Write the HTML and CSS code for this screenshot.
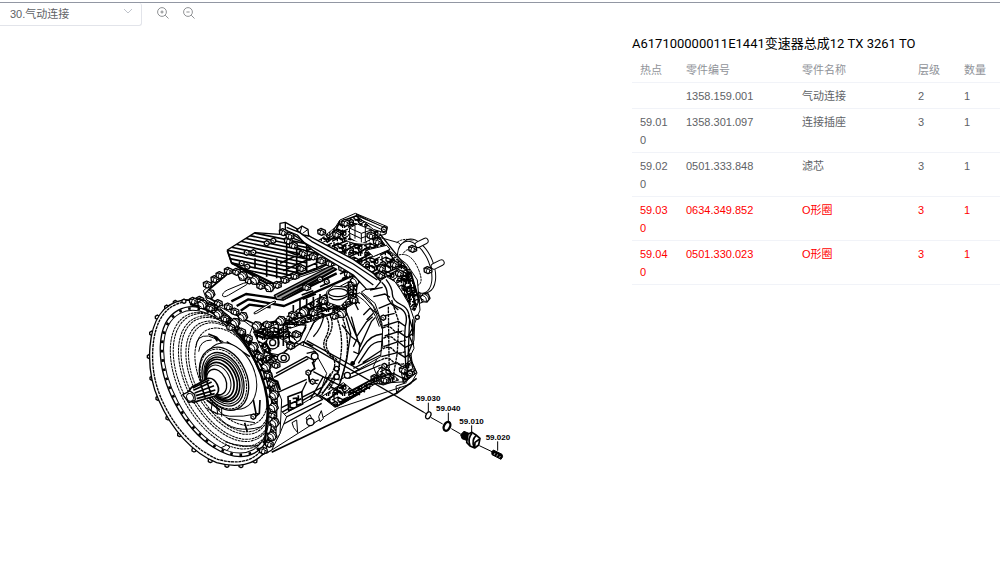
FILE: index.html
```html
<!DOCTYPE html>
<html lang="zh-CN">
<head>
<meta charset="utf-8">
<title>零件目录</title>
<link rel="stylesheet" href="styles.css">
</head>
<body>
<main class="page">
  <section class="viewer">
    <div class="toolbar">
      <div class="picker">
        <select class="picker-select" aria-label="分组"><option>30.气动连接</option></select>
        <svg class="picker-arrow" viewBox="0 0 10 6" aria-hidden="true"><path d="M1 1l4 4 4-4"/></svg>
      </div>
      <button class="tool" type="button" aria-label="放大"><svg viewBox="0 0 12 12"><circle cx="5" cy="5" r="4.4"/><path d="M8.2 8.2l3.3 3.3M3.4 5h3.2M5 3.4v3.2"/></svg></button>
      <button class="tool" type="button" aria-label="缩小"><svg viewBox="0 0 12 12"><circle cx="5" cy="5" r="4.4"/><path d="M8.2 8.2l3.3 3.3M3.4 5h3.2"/></svg></button>
    </div>
    <figure class="drawing">
      <svg class="gearbox" viewBox="0 0 1140 825" role="img" aria-label="变速器总成">
        <defs>
          <pattern id="mesh" width="48" height="42" patternUnits="userSpaceOnUse">
            <path d="M0 12l18-9 14 8 16-8M0 34l15-8 13 10 20-12M6 0v14l10 6v20M32 11v15l12 8M18 3v11l14 8M0 22l10-5M38 42V30M22 28l10 6v8M0 40l22-12M20 20l26-13" class="m"/>
            <ellipse cx="10" cy="28" rx="5" ry="4" class="n"/><ellipse cx="38" cy="17" rx="4" ry="5" class="n"/>
          </pattern>
          <g id="nut"><path d="M-7-4L0-8 7-4 7 4 0 8-7 4z" class="n"/><path d="M-3-1L3 2" class="h"/></g>
          <g id="tab"><path d="M-6-3L0-7 6-3 5 4 0 6-6 3z" class="n"/></g>
          <g id="lug"><path d="M-12-6L-2-11 11-5 12 5 0 10-11 5z" class="n"/><path d="M-11-5Q0-8 10 2M-6 8Q-7 0 2-9M3 9L6-2" class="h"/></g>
          <g id="boss"><path d="M-14-2L-4-13 10-11 15 2 6 13-8 12z" class="n"/><path d="M-9-7Q6-4 4 12M-3-12Q12-6 12 6M-13 2L-2 9" class="h"/></g>
          <clipPath id="bore"><ellipse cx="229" cy="545" rx="130" ry="232" transform="rotate(-28 229 545)"/></clipPath>
          <clipPath id="fins"><path d="M262 150L345 98 430 104 500 130 582 182 540 205 400 252 345 224 275 190z"/></clipPath>
        </defs>

        <!-- output flange -->
        <path d="M718 112L775 128 800 150 850 250 835 290 790 260z" class="w"/>
        <ellipse cx="833" cy="198" rx="47" ry="85" transform="rotate(-22 833 198)" class="w"/>
        <ellipse cx="824" cy="202" rx="45" ry="82" transform="rotate(-22 824 202)" class="w"/>
        <path d="M776 165Q812 155 834 205T826 258M790 160Q800 145 812 150M770 128Q790 112 820 122" class="l d"/>
        <g><path d="M834 134l22-11M882 199l22-11M838 301l18-8" class="po"/><path d="M834 134l22-11M882 199l22-11M838 301l18-8" class="pi"/></g>
        <use href="#lug" x="818" y="147"/><use href="#lug" x="864" y="211"/><use href="#nut" x="833" y="283"/>

        <!-- rear housing -->
        <path d="M560 122L600 60 646 40 742 80 738 102 716 108 745 150 800 192 832 240 840 330 824 370 822 420 812 455 816 485 831 519 812 552 592 625 380 760 330 400 420 180z" class="w h"/>
        <path d="M545 115L600 70 650 46 728 86 716 108 748 155 800 200 826 260 824 330 802 300 780 265 740 235 700 242 600 180 520 130z" fill="url(#mesh)" class="l"/>
        <path d="M608 62L648 48 728 84M648 42L738 88M704 98L770 190 806 216M720 102L795 196M675 168L740 135M650 190L720 160" class="k"/>
        <path d="M560 128L610 90M575 140L640 115M600 158L670 125M625 172L690 140M640 188L700 158M600 62L580 110M690 220L745 190M700 235L770 205" class="b"/>
        <path d="M648 46L728 80 742 82 738 100 700 88z" class="w h"/><path d="M655 56L732 92" class="h"/>
        <path d="M628 84L652 72 694 90 690 120 662 132 630 115z" class="w h"/><path d="M628 84L664 100 694 90M664 100v30M645 78v38M676 84v40M630 100L662 115 692 104" class="h"/>
        <path d="M610 117Q640 137 690 132M680 150L740 136 750 148 700 170z" class="w h"/>
        <path d="M785 215L808 207 838 300 824 332 800 320z" fill="url(#mesh)" class="h"/>
        <path d="M808 216L790 270 815 262 805 322M788 235L822 244M830 270L800 300M812 215L838 305M800 210L828 320" class="b"/>
        <use href="#lug" x="617" y="69"/><use href="#lug" x="545" y="96"/><use href="#lug" x="590" y="103"/><use href="#lug" x="693" y="107"/><use href="#lug" x="712" y="125"/><use href="#nut" x="732" y="88"/><use href="#lug" x="724" y="205"/><use href="#lug" x="763" y="193"/><use href="#lug" x="722" y="226"/><use href="#nut" x="670" y="210"/><use href="#tab" x="832" y="352"/><use href="#boss" x="855" y="293"/><use href="#lug" x="778" y="220"/>

        <!-- rear ribbed case -->
        <path d="M716 245L740 230 765 245 782 270 806 310 823 360 818 420 822 445 810 470 818 505 800 545 720 550 700 500 728 440 726 370 705 310 664 276z" class="w h"/>
        <path d="M725 247Q742 262 742 285T775 322 796 378Q792 420 796 470T790 545M738 238Q757 262 757 282T785 315 808 375L802 540" class="k"/>
        <path d="M690 270L728 262M700 290L735 282 750 292M716 325L752 310 775 330M722 350L764 340M730 378L775 364 795 378M734 408L775 395 800 412 820 400M730 440L775 425 795 442 822 430M724 470L772 458 795 472 812 460M715 505L772 488 798 510M704 535L760 520 798 540" class="k"/>
        <path d="M728 384Q748 374 758 388T790 392M730 415Q750 403 762 417T798 420M728 447Q748 435 760 450T796 455M724 480Q744 468 757 483T795 490M755 300L776 365 772 458 758 540M745 320L748 540" class="k2"/>
        <path d="M805 345l12 40-10 20 10 25-12 30 12 30M818 358v50" class="k"/>
        <path d="M712 515L735 490 755 520 776 540 730 555 700 548z" fill="url(#mesh)" class="h"/>
        <path d="M782 505L812 480 830 518 790 550z" fill="url(#mesh)" class="h"/>
        <use href="#lug" x="790" y="510"/><use href="#nut" x="810" y="520"/><use href="#lug" x="705" y="535"/><use href="#nut" x="733" y="498"/><use href="#lug" x="735" y="540"/><use href="#nut" x="730" y="353"/>

        <!-- mid case -->
        <path d="M605 300L660 278 700 320 728 390 722 470 600 540 500 520 490 430 520 370z" class="w"/>
        <path d="M650 285Q700 315 718 380M663 280Q712 312 728 386" class="h"/>
        <path d="M585 340Q612 400 602 470T565 570M600 335Q630 400 620 470T578 590M570 345Q585 375 565 410T585 475 545 580M560 352Q574 380 557 412T574 470 530 580" class="k2"/>
        <path d="M618 352L632 400 620 480 600 550M634 350L652 415 640 440M612 320L650 410 680 365 698 350M650 410L660 440 694 365 706 352" class="k"/>
        <path d="M640 490L670 440Q690 405 726 402M655 490L685 445Q700 425 726 424M668 488L726 450M640 505L722 465M635 520L722 480M626 535L722 495" class="k"/>
        <path d="M606 375L634 410 660 430 656 462 640 455M655 330L640 300 660 310M670 345L690 325 710 340M680 360L700 340" class="k"/>
        <circle cx="638" cy="490" r="7"/><circle cx="590" cy="530" r="8" class="n"/><circle cx="590" cy="506" r="7" class="n"/><circle cx="622" cy="526" r="9" class="n"/>
        <path d="M545 590L610 548 640 572 726 520 716 545 610 610 585 622z" fill="url(#mesh)" class="h"/>
        <path d="M622 578L706 533M626 585L706 543M630 592L690 560M602 612L660 580M560 600L600 574M590 620L630 590M538 585L590 620M604 575L570 560M655 565l20 11M640 572l20 12M672 556l18 10" class="b"/>
        <path d="M395 757L560 678M560 678L770 580 830 535" class="b"/>
        <path d="M770 580L768 558 800 548M770 580L780 560" class="h"/>

        <!-- lower front case -->
        <path d="M378 470L470 430 520 448 560 520 540 580 420 650 395 600z" class="w"/>
        <path d="M402 532L505 476M410 548L412 578 500 538M408 520L500 470 520 480 524 505 505 520 508 545 536 540" class="k"/>
        <path d="M420 640L525 580 548 598 420 660M420 678L545 610M395 600L420 625 550 560M470 608L500 545M510 600L550 530M530 590L572 520M545 585L585 525" class="k"/>
        <path d="M444 590L485 575 488 612 446 632z" class="b w"/><path d="M450 600v22l13 3M458 596l12-2v22l14-5M475 586v18M450 612l34-16" class="b"/>
        <path d="M398 605L440 650 420 700 398 740 384 680z" class="w h"/><path d="M456 668l14-8 3 38-12-15zM498 654l12-10 12 28-18-4zM536 650l8-18 6 24-10 9z" class="w h"/><circle cx="511" cy="666" r="11" class="n"/>
        <path d="M500 460l25-6 8 12-8 18-8 4 8 18-14 10M505 520l4 22 24 10" class="k"/>
        <circle cx="524" cy="469" r="10" class="n"/><use href="#nut" x="505" y="518"/><use href="#nut" x="518" y="545"/>
        <path d="M340 395L450 395 470 425 420 470 390 500z" fill="url(#mesh)" class="h"/>
        <path d="M375 425L400 405 430 420 450 440 420 465 390 460z" class="w h"/><circle cx="398" cy="428" r="19" class="n"/><circle cx="398" cy="428" r="9" class="n"/><ellipse cx="430" cy="473" rx="18" ry="14" class="n"/><ellipse cx="431" cy="474" rx="8" ry="8" class="n"/><use href="#lug" x="408" y="495"/>
        <path d="M488 425L850 636M500 422L660 510M520 515L610 562M450 450L490 425 520 438M460 400Q490 410 498 380" class="k"/>
        <path d="M498 375L480 420 452 440 440 372zM530 350L510 390M552 345Q545 385 520 410" class="k"/><use href="#lug" x="470" y="403"/><use href="#lug" x="452" y="438"/>

        <!-- top cover -->
        <path d="M190 272L262 212 310 208 400 258 600 190 655 235 645 300 575 340 470 368 412 372 350 392 296 350 200 300z" class="w h"/>
        <path d="M470 330L650 232 650 305 600 335 450 385 430 375z" fill="url(#mesh)" class="h"/>
        <path d="M205 270L262 222M198 258L255 218 318 216M325 240Q370 265 400 272M262 320L300 352 350 375 420 362M200 290L250 318" class="b"/>
        <path d="M248 288Q245 279 262 270L310 250Q330 244 320 254L265 286Q252 293 248 288z" class="w h"/>
        <path d="M274 304L318 282 430 298 590 220M290 318L325 298 432 318 640 226M302 332L328 314 392 322" class="bb"/>
        <path d="M342 338L396 306Q408 300 408 306L350 340Q340 345 342 338z" class="w h"/>
        <path d="M403 286L572 198 590 208 430 300 410 298z" class="k g"/><path d="M412 290L580 203M425 296L588 208" class="b"/>
        <path d="M485 285l35-13M500 290l20-10M540 260l30-14M488 298l40-16M600 222l24-12M606 236l26-12M470 262l60-30M480 272l90-42" class="b"/>
        <path d="M560 275L580 258 620 262 630 290 600 320 565 308z" class="w h"/><ellipse cx="594" cy="278" rx="29" ry="12" class="n"/><path d="M566 290Q590 310 622 288M578 312l8 34h30l6-42" class="k"/>
        <path d="M480 300v35l12 14M500 296v40M520 290v40M540 282v42l12 10M460 315v35M625 245v55M640 240v60l10 12M415 360v80M430 360v78M382 385v24l34 2M350 396Q380 414 425 400M345 404Q385 424 428 408M440 350L560 310M450 362L600 318" class="b"/>
        <path d="M340 378L440 355 445 392 390 408 345 398z" fill="url(#mesh)" class="h"/>
        <use href="#lug" x="202" y="254"/><use href="#lug" x="225" y="238"/><use href="#lug" x="240" y="226"/><use href="#lug" x="265" y="213"/><use href="#lug" x="290" y="216"/><use href="#boss" x="308" y="228"/><use href="#lug" x="328" y="242"/><use href="#boss" x="210" y="282"/><use href="#lug" x="180" y="300"/><use href="#lug" x="235" y="310"/><use href="#lug" x="265" y="320"/><use href="#boss" x="308" y="350"/><use href="#lug" x="285" y="335"/><use href="#boss" x="350" y="378"/><use href="#lug" x="382" y="374"/><use href="#boss" x="422" y="362"/><use href="#lug" x="458" y="345"/><use href="#boss" x="492" y="335"/><use href="#lug" x="520" y="338"/><use href="#lug" x="550" y="302"/><use href="#lug" x="583" y="348"/><use href="#boss" x="606" y="340"/><use href="#boss" x="645" y="242"/><use href="#lug" x="625" y="222"/><use href="#lug" x="608" y="205"/><use href="#lug" x="500" y="262"/><use href="#lug" x="642" y="300"/><use href="#nut" x="560" y="245"/><use href="#nut" x="540" y="238"/>

        <!-- control unit with cooling fins -->
        <path d="M262 150L345 98 430 104 500 130 582 182 540 205 400 252 345 224 275 190z" class="w k"/>
        <g clip-path="url(#fins)">
          <path d="M340 98l230 48M325 106l230 48M311 114l230 48M298 123l230 48M284 132l230 48M271 141l230 48M260 150l230 48M262 162l230 48M266 175l230 48M270 188l230 48M300 206l230 48" class="b"/>
          <path d="M420 190L580 115M430 212L600 135M420 236L620 150M420 248L620 167M345 175v30M380 180v50M410 175v60M440 130v95M470 130v95M500 130v90M530 150v70M440 130l60 25M430 150l80 30" class="b"/>
        </g>
        <path d="M262 152L275 190 345 226M275 188L400 250M292 200L400 262" class="b"/>
        <use href="#nut" x="320" y="158"/><use href="#nut" x="340" y="157"/><use href="#nut" x="305" y="190"/><use href="#nut" x="322" y="200"/><use href="#boss" x="345" y="240"/><use href="#lug" x="362" y="258"/><use href="#boss" x="388" y="262"/><use href="#lug" x="412" y="255"/><use href="#lug" x="435" y="240"/><use href="#lug" x="465" y="228"/><use href="#nut" x="380" y="130"/><use href="#nut" x="400" y="122"/><use href="#lug" x="520" y="170"/><use href="#lug" x="545" y="182"/><use href="#lug" x="570" y="190"/><use href="#lug" x="490" y="160"/><use href="#lug" x="460" y="136"/><use href="#lug" x="485" y="205"/><use href="#lug" x="445" y="122"/>

        <!-- long top rib -->
        <path d="M420 70L436 67 474 88 515 112 640 178 700 220 722 245 705 265 680 268 640 225 520 152 484 120 460 104 420 92z" class="w k"/>
        <path d="M436 67V90L472 105 492 128 640 210 700 255M440 82L480 98 515 124 640 192 712 240" class="k"/>
        <path d="M470 90L486 78 504 88 506 108 490 105z" class="w k"/><path d="M486 78l-6 20M504 88l-16 12" class="h"/><use href="#lug" x="430" y="97"/><use href="#lug" x="450" y="108"/>

        <!-- clutch bell housing -->
        <path d="M75 320L130 300 185 298 270 350 340 430 390 510 425 600 420 700 395 750 340 780z" class="w h"/>
        <path d="M180 300L225 312 280 360 330 420 380 480 400 540 412 600 408 700 380 740 360 600 300 450z" fill="url(#mesh)" class="h"/>
        <g class="tabs"><use href="#tab" x="106" y="308"/><use href="#tab" x="80" y="322"/><use href="#tab" x="52" y="352"/><use href="#tab" x="35" y="400"/><use href="#tab" x="28" y="470"/><use href="#tab" x="36" y="535"/><use href="#tab" x="54" y="595"/><use href="#tab" x="84" y="654"/><use href="#tab" x="119" y="704"/><use href="#tab" x="162" y="750"/><use href="#tab" x="211" y="782"/><use href="#tab" x="261" y="796"/><use href="#tab" x="303" y="797"/><use href="#tab" x="345" y="783"/></g>
        <path d="M130 300C70 310 36 360 30 440C25 500 36 555 56 600C95 690 160 760 230 788C290 805 345 795 375 755C420 640 380 500 300 400C240 330 180 298 130 300z" class="w k"/>
        <path d="M128 307C77 317 45 363 39 440C34 500 45 552 64 596C102 682 163 748 233 778C290 794 338 786 366 748" class="k2"/>
        <ellipse cx="229" cy="545" rx="140" ry="243" transform="rotate(-28 229 545)" class="w k"/>
        <ellipse cx="230" cy="545" rx="136" ry="238" transform="rotate(-28 230 545)" class="teeth"/>
        <ellipse cx="229" cy="545" rx="130" ry="232" transform="rotate(-28 229 545)" class="w h"/>
        <g clip-path="url(#bore)">
          <g class="l d">
            <ellipse cx="244" cy="542" rx="127" ry="222" transform="rotate(-28 244 542)"/>
            <ellipse cx="249" cy="540" rx="124" ry="216" transform="rotate(-28 249 540)"/>
            <ellipse cx="257" cy="536" rx="118" ry="204" transform="rotate(-28 257 536)"/>
            <ellipse cx="260" cy="535" rx="114" ry="198" transform="rotate(-28 260 535)"/>
            <ellipse cx="265" cy="533" rx="106" ry="184" transform="rotate(-28 265 533)"/>
            <ellipse cx="268" cy="532" rx="102" ry="177" transform="rotate(-28 268 532)"/>
            <ellipse cx="274" cy="530" rx="91" ry="158" transform="rotate(-28 274 530)"/>
          </g>
          <path d="M168 440Q170 405 205 408L250 425M176 455Q180 420 215 420M200 625Q260 665 355 640M218 600l12 15 3 28-20-10zM245 612v38M262 655L345 668M235 650Q280 705 365 680" class="h"/>
          <path d="M205 402l25 10 18 20 30 8M222 408l10 16M314 668l8 28M340 600l8 40-8 15 18-15 2-40M200 600L240 630M260 425L330 470" class="b"/>
          <path d="M240 745l20-10 10 6-12 14-18 2zM255 725Q310 745 365 735" class="h"/>
        </g>
        <ellipse cx="272" cy="528" rx="72" ry="104" transform="rotate(-24 272 528)" class="w h"/>
        <ellipse cx="252" cy="536" rx="68" ry="99" transform="rotate(-24 252 536)" class="w k"/>
        <ellipse cx="250" cy="537" rx="64" ry="94" transform="rotate(-24 250 537)" class="l d"/>
        <ellipse cx="249" cy="538" rx="58" ry="84" transform="rotate(-24 249 538)" class="w k"/>
        <ellipse cx="249" cy="538" rx="53" ry="77" transform="rotate(-24 249 538)" class="w h"/>
        <ellipse cx="247" cy="538" rx="48" ry="70" transform="rotate(-24 247 538)" class="w b"/>
        <ellipse cx="244" cy="539" rx="44" ry="64" transform="rotate(-24 244 539)" class="w b"/>
        <ellipse cx="240" cy="541" rx="39" ry="56" transform="rotate(-24 240 541)" class="w b"/>
        <ellipse cx="236" cy="542" rx="34" ry="49" transform="rotate(-24 236 542)" class="w h"/>
        <ellipse cx="230" cy="546" rx="28" ry="40" transform="rotate(-24 230 546)" class="w k"/>
        <path d="M155 562L205 535Q222 533 232 554T225 588L160 607Q145 603 138 585z" class="w b"/>
        <path d="M160 571L215 546M164 579L222 557M168 587L226 570M170 596L224 581M158 564L208 540M182 552l14 42M200 543l14 42" class="b"/>
        <path d="M128 584L150 573 164 583 166 600 147 608z" class="w k"/><ellipse cx="150" cy="592" rx="10" ry="12" transform="rotate(-20 150 592)" class="w h"/>

        <path d="M150 312Q265 340 328 450T382 650L374 735" class="bb"/><path d="M192 316Q280 350 340 440T398 640" class="k"/>
        <g class="bosses"><use href="#tab" x="132" y="304"/><use href="#lug" x="160" y="303"/><use href="#boss" x="187" y="313"/><use href="#lug" x="212" y="324"/><use href="#boss" x="235" y="342"/><use href="#lug" x="255" y="356"/><use href="#boss" x="285" y="368"/><use href="#lug" x="272" y="382"/><use href="#lug" x="305" y="395"/><use href="#lug" x="325" y="415"/><use href="#boss" x="340" y="440"/><use href="#lug" x="358" y="468"/><use href="#boss" x="378" y="500"/><use href="#lug" x="384" y="525"/><use href="#lug" x="394" y="550"/><use href="#boss" x="402" y="585"/><use href="#boss" x="400" y="622"/><use href="#lug" x="398" y="645"/><use href="#boss" x="403" y="668"/><use href="#boss" x="396" y="708"/><use href="#lug" x="388" y="732"/><use href="#lug" x="370" y="752"/></g>
        <use href="#nut" x="340" y="650"/>
        <path d="M400 540L412 545 420 570M385 455L400 470 380 485M378 430L392 455M392 462L372 452" class="bb"/>

        <!-- exploded parts -->
        <path d="M848 635L860 642M872 652L908 672M934 686L962 702M1018 737L1058 756" class="h"/>
        <ellipse cx="865" cy="646" rx="7" ry="11" transform="rotate(25 865 646)" class="k w"/>
        <ellipse cx="921" cy="679" rx="9" ry="14" transform="rotate(25 921 679)" class="seal"/>
        <path d="M962 704L972 694 994 703 987 724 966 716z" class="solid"/>
        <path d="M984 703L996 697 1008 705 1020 715 1016 735 1004 744 990 738 980 727z" class="w b"/><path d="M996 700Q982 714 990 737M1008 707Q994 720 1002 742M1019 717L1005 727 1004 742" class="b"/>
        <path d="M1060 750L1086 763Q1091 770 1083 778L1056 764Q1053 755 1060 750z" class="solid"/><path d="M1065 759l-3 6M1073 763l-3 6M1081 768l-3 5" class="glint"/>
        <path d="M865 608v26M925 638v26M995 676v24M1073 724v28" class="h"/>
        <g class="callout"><text x="828" y="602">59.030</text><text x="888" y="632">59.040</text><text x="958" y="671">59.010</text><text x="1037" y="719">59.020</text></g>
      </svg>
    </figure>
  </section>

  <section class="parts">
    <h1 class="parts-title">A617100000011E1441变速器总成12 TX 3261 TO</h1>
    <table class="parts-table">
      <colgroup><col class="c-spot"><col class="c-wide"><col class="c-wide"><col class="c-spot"><col></colgroup>
      <thead><tr><th>热点</th><th>零件编号</th><th>零件名称</th><th>层级</th><th>数量</th></tr></thead>
      <tbody>
        <tr><td></td><td>1358.159.001</td><td>气动连接</td><td>2</td><td>1</td></tr>
        <tr><td>59.010</td><td>1358.301.097</td><td>连接插座</td><td>3</td><td>1</td></tr>
        <tr><td>59.020</td><td>0501.333.848</td><td>滤芯</td><td>3</td><td>1</td></tr>
        <tr class="marked"><td>59.030</td><td>0634.349.852</td><td>O形圈</td><td>3</td><td>1</td></tr>
        <tr class="marked"><td>59.040</td><td>0501.330.023</td><td>O形圈</td><td>3</td><td>1</td></tr>
      </tbody>
    </table>
  </section>
</main>
</body>
</html>
```
FILE: styles.css
```css
* { box-sizing: border-box; }
body {
  margin: 0;
  background: #fff;
  color: #606266;
  font: 11px/18px "Liberation Sans", "Noto Sans CJK SC", sans-serif;
}
.page {
  display: grid;
  grid-template-columns: minmax(0, 632fr) minmax(0, 368fr);
  margin-top: 2px;
  border-top: 1px solid #9297a3;
}
.toolbar { display: flex; align-items: flex-start; }
.picker { position: relative; width: 142px; }
.picker-select {
  display: block;
  appearance: none;
  width: 100%;
  height: 23px;
  padding: 0 24px 0 10px;
  border: 1px solid #e2e4ea;
  border-width: 0 1px 1px 0;
  border-radius: 0 3px 3px 0;
  background: #fff;
  color: #606266;
  font: inherit;
}
.picker-arrow { position: absolute; right: 9px; top: 5px; width: 10px; height: 6px; pointer-events: none; }
.picker-arrow path { fill: none; stroke: #c0c4cc; }
.tool { margin: 4px 0 0 15px; padding: 0; border: 0; background: none; width: 12px; height: 12px; }
.tool svg { display: block; width: 12px; height: 12px; fill: none; stroke: #73767a; stroke-width: 0.8; }
.tool + .tool { margin-left: 14px; }

.drawing { margin: 174px 0 0; padding-left: 140px; }
.gearbox { display: block; width: 100%; max-width: 380px; }
.gearbox path, .gearbox ellipse, .gearbox circle { stroke-linejoin: round; }
.m { fill: none; stroke: #000; stroke-width: 4; }
.n { fill: #fff; stroke: #000; stroke-width: 4; }
.l { stroke: #000; stroke-width: 2; }
path.l:not([fill]), ellipse.l, .l ellipse { fill: none; }
.h { stroke: #000; stroke-width: 3; }
.k { stroke: #000; stroke-width: 4; }
.k2 { stroke: #000; stroke-width: 4; stroke-dasharray: 9 2; }
.b { stroke: #000; stroke-width: 5; }
.bb { fill: none; stroke: #000; stroke-width: 7; }
.h:not([fill]):not(.w), .k:not(.w):not(.g), .k2:not(.w), .b:not(.w) { fill: none; }
.w { fill: #fff; }
.w:not(.h):not(.k):not(.b):not(.k2) { stroke: #000; stroke-width: 3; }
.d { stroke-dasharray: 8 2; stroke-width: 3; }
.g { fill: #999; }
.teeth { fill: none; stroke: #000; stroke-width: 8; stroke-dasharray: 8 20; }
.po { fill: none; stroke: #000; stroke-width: 20; stroke-linecap: round; }
.pi { fill: none; stroke: #fff; stroke-width: 14; stroke-linecap: round; }
.seal { fill: #fff; stroke: #000; stroke-width: 7; }
.solid { fill: #000; stroke: #000; stroke-width: 3; }
.glint { stroke: #fff; stroke-width: 2; }
.callout { font: bold 24px "Liberation Sans", sans-serif; fill: #000; }

.parts { padding-top: 32px; }
.parts-title {
  margin: 0;
  color: #000;
  font: 400 13px/18px Roboto, "Noto Sans CJK SC", sans-serif;
  white-space: nowrap;
}
.parts-table { width: 100%; margin-top: 4px; table-layout: fixed; border-collapse: separate; border-spacing: 0; }
.c-spot { width: 46px; }
.c-wide { width: 116px; }
.parts-table th, .parts-table td {
  padding: 4px 8px 3px;
  border-bottom: 1px solid #f1f3f8;
  text-align: left;
  vertical-align: top;
  font-weight: 400;
  overflow-wrap: anywhere;
}
.parts-table th { color: #909399; }
.marked { color: #f00; }
```
